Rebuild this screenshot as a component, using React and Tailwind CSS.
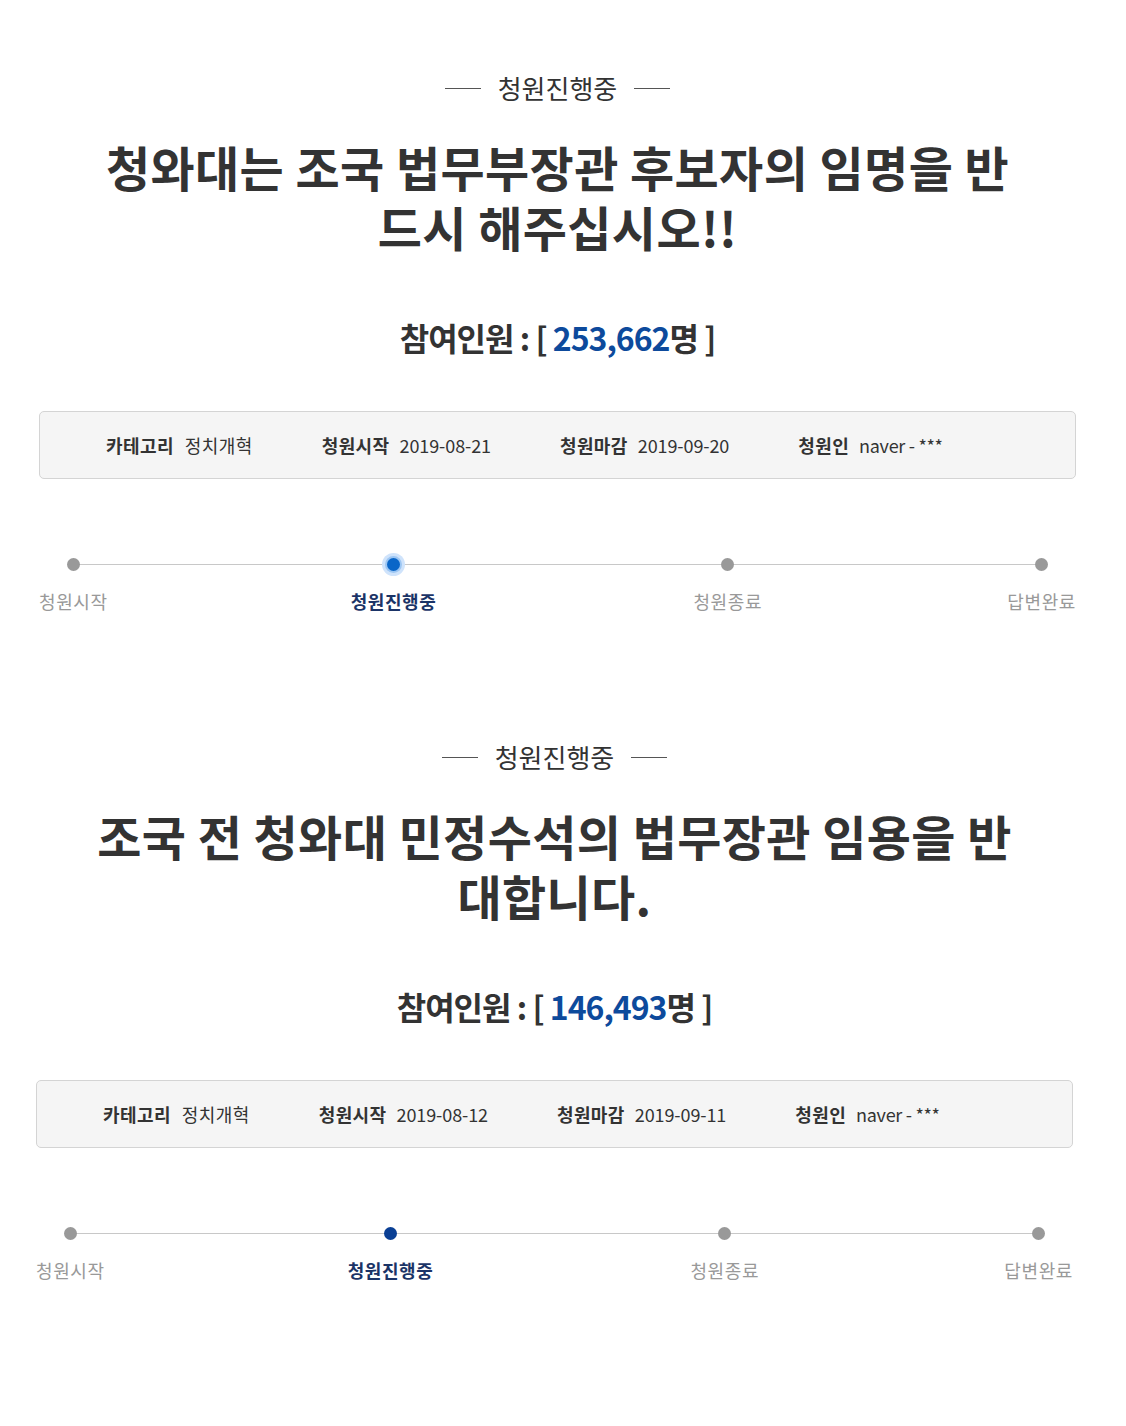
import React from 'react'

const petitions = [
  {
    title: '청와대는 조국 법무부장관 후보자의 임명을 반드시 해주십시오!!',
    count: '253,662',
    category: '정치개혁',
    start: '2019-08-21',
    end: '2019-09-20',
    author: 'naver - ***',
    glow: true,
    shift: 'ml-[39px]',
  },
  {
    title: '조국 전 청와대 민정수석의 법무장관 임용을 반대합니다.',
    count: '146,493',
    category: '정치개혁',
    start: '2019-08-12',
    end: '2019-09-11',
    author: 'naver - ***',
    glow: false,
    shift: 'ml-[36px]',
  },
]

const font = { fontFamily: '"Noto Sans CJK KR", "Noto Sans", sans-serif' }

function Dot({ active, glow }) {
  if (!active) return <span className="block w-[13px] h-[13px] rounded-full bg-[#999]" />
  return (
    <span className={`flex items-center justify-center w-[23px] h-[23px] rounded-full ${glow ? 'bg-[#cfe3fb]' : ''}`}>
      <span className={`flex items-center justify-center w-[17px] h-[17px] rounded-full ${glow ? 'bg-[#9cc6f3]' : ''}`}>
        <span className={`block w-[13px] h-[13px] rounded-full ${glow ? 'bg-[#0a66c8]' : 'bg-[#0a3f94]'}`} />
      </span>
    </span>
  )
}

function Progress({ glow }) {
  const steps = [
    { label: '청원시작', cls: '' },
    { label: '청원진행중', cls: 'ml-[243px]', active: true },
    { label: '청원종료', cls: 'ml-[257px]' },
    { label: '답변완료', cls: 'ml-auto' },
  ]
  return (
    <div className="relative mt-[74px]">
      {/* connecting line under the dots */}
      <div className="absolute left-[33px] right-[34px] top-[11px] h-px bg-[#c8c8c8]" />
      <div className="relative flex">
        {steps.map((s) => (
          <div key={s.label} className={`flex flex-col items-center ${s.cls}`}>
            <div className="h-[23px] flex items-center justify-center">
              <Dot active={s.active} glow={glow} />
            </div>
            <span
              className={`mt-[12px] text-[18px] leading-[26px] tracking-[0.6px] ${
                s.active ? 'font-bold text-[#1b3467]' : 'text-[#999]'
              }`}
            >
              {s.label}
            </span>
          </div>
        ))}
      </div>
    </div>
  )
}

function Petition({ p }) {
  return (
    <div className={`w-[1037px] ${p.shift}`}>
      {/* status heading */}
      <div className="flex items-center justify-center gap-[17px]">
        <span className="block w-[36px] h-px bg-[#555]" />
        <span className="text-[26px] leading-[36px] text-[#333]">청원진행중</span>
        <span className="block w-[36px] h-px bg-[#555]" />
      </div>

      <h2 className="mx-auto mt-[30px] w-[925px] text-center text-[48px] leading-[60px] font-bold text-[#333] tracking-[0.4px]">
        {p.title}
      </h2>

      <div className="mt-[59px] text-center text-[32px] leading-[44px] font-bold text-[#333] tracking-[-1px]">
        참여인원 : [ <span className="text-[#0d4a9c]">{p.count}</span>명 ]
      </div>

      {/* meta info */}
      <div className="mt-[52px] h-[68px] flex items-center gap-[69px] pl-[66px] bg-[#f5f5f5] border border-[#d4d4d4] rounded-[5px] text-[18px] text-[#333]">
        <div className="flex items-center gap-[11px]">
          <span className="font-bold tracking-[0.4px]">카테고리</span>
          <span className="tracking-[0.4px]">{p.category}</span>
        </div>
        <div className="flex items-center gap-[10px]">
          <span className="font-bold tracking-[0.4px]">청원시작</span>
          <span className="tracking-[-0.1px]">{p.start}</span>
        </div>
        <div className="flex items-center gap-[10px]">
          <span className="font-bold tracking-[0.4px]">청원마감</span>
          <span className="tracking-[-0.1px]">{p.end}</span>
        </div>
        <div className="flex items-center gap-[10px]">
          <span className="font-bold tracking-[0.4px]">청원인</span>
          <span className="tracking-[-0.3px]">{p.author}</span>
        </div>
      </div>

      <Progress glow={p.glow} />
    </div>
  )
}

export default function App() {
  return (
    <div className="min-h-[1426px] bg-white pt-[70px]" style={font}>
      <div className="flex flex-col gap-[125px]">
        {petitions.map((p) => (
          <Petition key={p.count} p={p} />
        ))}
      </div>
    </div>
  )
}
